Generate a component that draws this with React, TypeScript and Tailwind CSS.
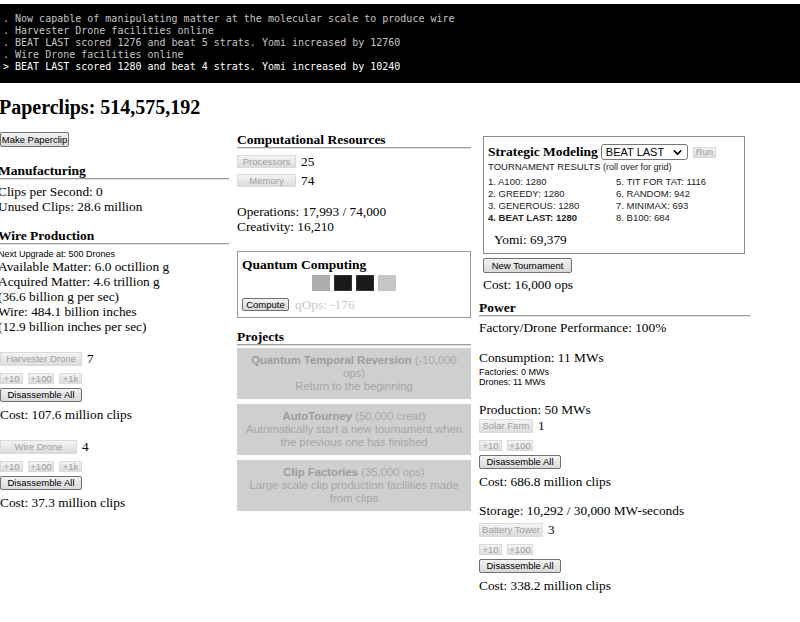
import type { ReactNode } from "react";
import { ChevronDown } from "lucide-react";

const serif = "font-['Liberation_Serif','Times_New_Roman',serif]";
const sans = "font-['Liberation_Sans',Arial,sans-serif]";

const consoleLines = [
  ". Now capable of manipulating matter at the molecular scale to produce wire",
  ". Harvester Drone facilities online",
  ". BEAT LAST scored 1276 and beat 5 strats. Yomi increased by 12760",
  ". Wire Drone facilities online",
];

const results = [
  ["1. A100: 1280", "5. TIT FOR TAT: 1116"],
  ["2. GREEDY: 1280", "6. RANDOM: 942"],
  ["3. GENEROUS: 1280", "7. MINIMAX: 693"],
  ["4. BEAT LAST: 1280", "8. B100: 684"],
];

function Btn({
  children,
  className = "",
}: {
  children: ReactNode;
  className?: string;
}) {
  return (
    <div
      className={`${sans} flex shrink-0 items-center justify-center rounded-[2px] border border-[#707070] bg-linear-to-b from-[#f3f3f3] to-[#d9d9d9] text-[9.5px] leading-[10px] whitespace-nowrap text-black ${className}`}
    >
      {children}
    </div>
  );
}

function Off({
  children,
  className = "",
}: {
  children: ReactNode;
  className?: string;
}) {
  return (
    <div
      className={`${sans} flex shrink-0 items-center justify-center border border-[#dadada] bg-linear-to-b from-[#f4f4f4] to-[#dcdcdc] text-[9.5px] leading-[10px] whitespace-nowrap text-[#a0a0a0] ${className}`}
    >
      {children}
    </div>
  );
}

function Heading({ children, shift = false }: { children: ReactNode; shift?: boolean }) {
  return (
    <>
      <div
        className={`${serif} text-[13.5px] leading-[15px] font-bold whitespace-nowrap ${shift ? "-ml-[2px]" : ""}`}
      >
        {children}
      </div>
      <div className="border-t border-b border-t-[#9c9c9c] border-b-[#e2e2e2]" />
    </>
  );
}

function Line({
  children,
  className = "",
}: {
  children: ReactNode;
  className?: string;
}) {
  return (
    <div className={`${serif} text-[13.33px] leading-[15px] whitespace-nowrap ${className}`}>
      {children}
    </div>
  );
}

function Builder({
  label,
  width,
  count,
  steps,
  cost,
  className = "",
}: {
  label: string;
  width: string;
  count: number;
  steps: string[];
  cost: string;
  className?: string;
}) {
  const stepWidths: Record<string, string> = {
    "+10": "w-[23px]",
    "+100": "w-[26px]",
    "+1k": "w-[23px]",
  };
  return (
    <div className={className}>
      <div className="flex h-[14px] items-center">
        <Off className={`h-[14px] ${width}`}>{label}</Off>
        <span className={`${serif} ml-[5px] text-[13.33px] leading-[14px]`}>{count}</span>
      </div>
      <div className="mt-[7px] flex gap-[5px]">
        {steps.map((s) => (
          <Off key={s} className={`h-[11px] ${stepWidths[s]}`}>
            {s}
          </Off>
        ))}
      </div>
      <Btn className="mt-[4px] h-[14px] w-[82px]">Disassemble All</Btn>
      <Line className="mt-[5px]">Cost: {cost}</Line>
    </div>
  );
}

function Project({ title, cost, desc }: { title: string; cost: string; desc: string }) {
  return (
    <div
      className={`${sans} bg-[#cfcfcf] px-[6px] py-[6px] text-center text-[11.3px] leading-[13px] text-[#a6a6a6]`}
    >
      <span className="font-bold text-[#9c9c9c]">{title}</span> {cost}
      <br />
      {desc}
    </div>
  );
}

export default function App() {
  return (
    <div className="min-h-[622px] w-[800px] overflow-hidden bg-white text-black">
      <div className="mt-[4px] h-[79px] bg-black pt-[9px] pl-[3px] font-['DejaVu_Sans_Mono',monospace] text-[10px] leading-[12px] whitespace-pre">
        {consoleLines.map((l) => (
          <div key={l} className="text-[#c4c4c4]">
            {l}
          </div>
        ))}
        <div className="text-white">{"> BEAT LAST scored 1280 and beat 4 strats. Yomi increased by 10240"}</div>
      </div>

      <div className={`${serif} mt-[13px] -ml-[1px] text-[20px] leading-[23px] font-bold`}>
        Paperclips: 514,575,192
      </div>

      <div className="mt-[8px] flex items-start">
        {/* left column */}
        <div className="w-[229px] shrink-0">
          <Btn className="mt-[5px] h-[15px] w-[69px]">Make Paperclip</Btn>

          <div className="mt-[16px]">
            <Heading shift>Manufacturing</Heading>
          </div>
          <div className="mt-[4px] -ml-[2px]">
            <Line>Clips per Second: 0</Line>
            <Line>Unused Clips: 28.6 million</Line>
          </div>

          <div className="mt-[14px]">
            <Heading shift>Wire Production</Heading>
          </div>
          <div className={`${sans} mt-[4px] -ml-[2px] text-[9px] leading-[10px]`}>
            Next Upgrade at: 500 Drones
          </div>
          <div className="-ml-[2px]">
            <Line>Available Matter: 6.0 octillion g</Line>
            <Line>Acquired Matter: 4.6 trillion g</Line>
            <Line>(36.6 billion g per sec)</Line>
            <Line>Wire: 484.1 billion inches</Line>
            <Line>(12.9 billion inches per sec)</Line>
          </div>

          <Builder
            className="mt-[18px]"
            label="Harvester Drone"
            width="w-[82px]"
            count={7}
            steps={["+10", "+100", "+1k"]}
            cost="107.6 million clips"
          />
          <Builder
            className="mt-[18px]"
            label="Wire Drone"
            width="w-[77px]"
            count={4}
            steps={["+10", "+100", "+1k"]}
            cost="37.3 million clips"
          />
        </div>

        {/* middle column */}
        <div className="ml-[8px] w-[234px] shrink-0">
          <div className="mt-[5px]">
            <Heading>Computational Resources</Heading>
          </div>
          <div className="mt-[6px] flex h-[13px] items-center">
            <Off className="h-[13px] w-[59px]">Processors</Off>
            <span className={`${serif} ml-[5px] text-[13.33px] leading-[13px]`}>25</span>
          </div>
          <div className="mt-[6px] flex h-[13px] items-center">
            <Off className="h-[13px] w-[59px]">Memory</Off>
            <span className={`${serif} ml-[5px] text-[13.33px] leading-[13px]`}>74</span>
          </div>
          <div className="mt-[17px]">
            <Line>Operations: 17,993 / 74,000</Line>
            <Line>Creativity: 16,210</Line>
          </div>

          <div className="mt-[17px] border border-[#9a9a9a] px-[4px] pt-[5px] pb-[6px]">
            <div className={`${serif} text-[13.5px] leading-[15px] font-bold`}>Quantum Computing</div>
            <div className="mt-[3px] flex justify-center gap-[4px]">
              <div className="h-[16px] w-[18px] bg-[#adadad]" />
              <div className="h-[16px] w-[18px] border border-[#333] bg-[#1a1a1a]" />
              <div className="h-[16px] w-[18px] border border-[#333] bg-[#1a1a1a]" />
              <div className="h-[16px] w-[18px] bg-[#c6c6c6]" />
            </div>
            <div className="mt-[7px] flex h-[13px] items-center">
              <Btn className="h-[13px] w-[47px]">Compute</Btn>
              <span className={`${serif} ml-[6px] text-[13.33px] leading-[13px] text-[#c8c8c8]`}>
                qOps: -176
              </span>
            </div>
          </div>

          <div className="mt-[11px]">
            <Heading>Projects</Heading>
          </div>
          <div className="mt-[2px] flex flex-col gap-[5px]">
            <Project
              title="Quantum Temporal Reversion"
              cost="(-10,000 ops)"
              desc="Return to the beginning"
            />
            <Project
              title="AutoTourney"
              cost="(50,000 creat)"
              desc="Automatically start a new tournament when the previous one has finished"
            />
            <Project
              title="Clip Factories"
              cost="(35,000 ops)"
              desc="Large scale clip production facilities made from clips"
            />
          </div>
        </div>

        {/* right column */}
        <div className="ml-[8px] w-[271px] shrink-0">
          <div className="ml-[4px]">
            <div className="mt-[9px] w-[262px] border border-[#8c8c8c] px-[4px] pt-[7px] pb-[6px]">
              <div className="flex h-[16px] items-center">
                <span className={`${serif} text-[13.5px] leading-[16px] font-bold whitespace-nowrap`}>
                  Strategic Modeling
                </span>
                <div
                  className={`${sans} ml-[3px] flex h-[16px] w-[87px] items-center justify-between rounded-[3px] border border-[#767676] bg-white pr-[3px] pl-[4px] text-[11px] leading-[14px]`}
                >
                  BEAT LAST
                  <ChevronDown size={13} strokeWidth={3} />
                </div>
                <Off className="ml-[5px] h-[11px] w-[23px]">Run</Off>
              </div>
              <div className={`${sans} mt-[2px] text-[9.5px] leading-[10px] whitespace-nowrap text-[#1a1a1a]`}>
                TOURNAMENT RESULTS <span className="text-[9px]">(roll over for grid)</span>
              </div>
              <div className={`${sans} mt-[4px] text-[9.5px] leading-[12px] text-[#222]`}>
                {results.map(([a, b], i) => (
                  <div key={a} className="flex">
                    <span className={`w-[128px] ${i === 3 ? "font-bold" : ""}`}>{a}</span>
                    <span>{b}</span>
                  </div>
                ))}
              </div>
              <Line className="mt-[8px] ml-[6px]">Yomi: 69,379</Line>
            </div>
            <Btn className="mt-[4px] h-[15px] w-[89px]">New Tournament</Btn>
            <Line className="mt-[4px]">Cost: 16,000 ops</Line>
          </div>

          <div className="mt-[8px]">
            <Heading>Power</Heading>
          </div>
          <Line className="mt-[3px]">Factory/Drone Performance: 100%</Line>
          <Line className="mt-[15px]">Consumption: 11 MWs</Line>
          <div className={`${sans} mt-[2px] text-[9px] leading-[10px]`}>
            <div>Factories: 0 MWs</div>
            <div>Drones: 11 MWs</div>
          </div>
          <Line className="mt-[15px]">Production: 50 MWs</Line>
          <Builder
            className="mt-[2px]"
            label="Solar Farm"
            width="w-[54px]"
            count={1}
            steps={["+10", "+100"]}
            cost="686.8 million clips"
          />
          <Line className="mt-[14px]">Storage: 10,292 / 30,000 MW-seconds</Line>
          <Builder
            className="mt-[5px]"
            label="Battery Tower"
            width="w-[64px]"
            count={3}
            steps={["+10", "+100"]}
            cost="338.2 million clips"
          />
        </div>
      </div>
    </div>
  );
}
